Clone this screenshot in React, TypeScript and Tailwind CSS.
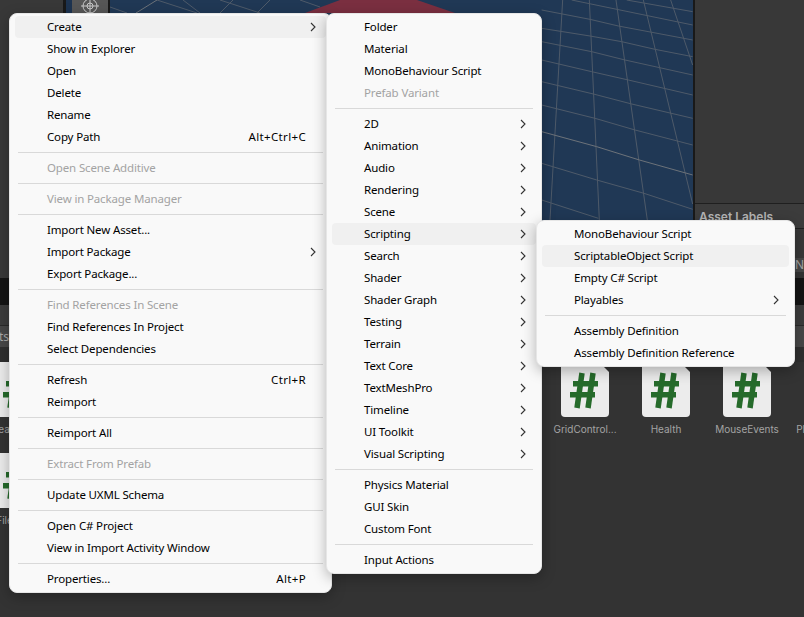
const mainMenu = [
  [
    { label: "Create", arrow: true, active: true },
    { label: "Show in Explorer" },
    { label: "Open" },
    { label: "Delete" },
    { label: "Rename" },
    { label: "Copy Path", shortcut: "Alt+Ctrl+C" },
  ],
  [{ label: "Open Scene Additive", disabled: true }],
  [{ label: "View in Package Manager", disabled: true }],
  [
    { label: "Import New Asset..." },
    { label: "Import Package", arrow: true },
    { label: "Export Package..." },
  ],
  [
    { label: "Find References In Scene", disabled: true },
    { label: "Find References In Project" },
    { label: "Select Dependencies" },
  ],
  [{ label: "Refresh", shortcut: "Ctrl+R" }, { label: "Reimport" }],
  [{ label: "Reimport All" }],
  [{ label: "Extract From Prefab", disabled: true }],
  [{ label: "Update UXML Schema" }],
  [{ label: "Open C# Project" }, { label: "View in Import Activity Window" }],
  [{ label: "Properties...", shortcut: "Alt+P" }],
];

const createMenu = [
  [
    { label: "Folder" },
    { label: "Material" },
    { label: "MonoBehaviour Script" },
    { label: "Prefab Variant", disabled: true },
  ],
  [
    { label: "2D", arrow: true },
    { label: "Animation", arrow: true },
    { label: "Audio", arrow: true },
    { label: "Rendering", arrow: true },
    { label: "Scene", arrow: true },
    { label: "Scripting", arrow: true, active: true },
    { label: "Search", arrow: true },
    { label: "Shader", arrow: true },
    { label: "Shader Graph", arrow: true },
    { label: "Testing", arrow: true },
    { label: "Terrain", arrow: true },
    { label: "Text Core", arrow: true },
    { label: "TextMeshPro", arrow: true },
    { label: "Timeline", arrow: true },
    { label: "UI Toolkit", arrow: true },
    { label: "Visual Scripting", arrow: true },
  ],
  [{ label: "Physics Material" }, { label: "GUI Skin" }, { label: "Custom Font" }],
  [{ label: "Input Actions" }],
];

const scriptingMenu = [
  [
    { label: "MonoBehaviour Script" },
    { label: "ScriptableObject Script", active: true },
    { label: "Empty C# Script" },
    { label: "Playables", arrow: true },
  ],
  [{ label: "Assembly Definition" }, { label: "Assembly Definition Reference" }],
];

type Item = {
  label: string;
  arrow?: boolean;
  active?: boolean;
  disabled?: boolean;
  shortcut?: string;
};

const Menu = ({ groups, className }: { groups: Item[][]; className: string }) => {
  return (
    <div
      className={`absolute rounded-lg border border-[#e6e6e6] bg-[#f9f9f9] px-[5px] py-[2px] shadow-[0_4px_14px_rgba(0,0,0,0.28)] ${className}`}
    >
      {groups.map((group, i) => (
        <div key={i}>
          {i > 0 && <div className="mx-[3px] my-1 h-px bg-[#d9d9d9]" />}
          {group.map((item) => (
            <div
              key={item.label}
              className={`flex h-[22px] items-center rounded pl-8 pr-[10px] text-[11.5px] tracking-[-0.15px] ${
                item.active ? "bg-[#f0f0f0]" : ""
              } ${item.disabled ? "text-[#a3a3a3]" : "text-black"}`}
            >
              <span className="flex-1 whitespace-nowrap">{item.label}</span>
              {item.shortcut && (
                <span className="pr-[10px] tracking-[0.35px]">{item.shortcut}</span>
              )}
              {item.arrow && (
                <svg width="6" height="10" viewBox="0 0 6 10" fill="none">
                  <path d="M1 1l4 4-4 4" stroke="#333" strokeWidth="1.1" />
                </svg>
              )}
            </div>
          ))}
        </div>
      ))}
    </div>
  );
};

const ScriptIcon = () => (
  <svg width="48" height="55" viewBox="0 0 48 55">
    <path
      d="M4 0h34l10 10v41a4 4 0 0 1-4 4H4a4 4 0 0 1-4-4V4a4 4 0 0 1 4-4z"
      fill="#ececec"
    />
    <g stroke="#266b2b" strokeWidth="5.5">
      <path d="M21 11L16 46" />
      <path d="M32 11L27 46" />
    </g>
    <path d="M12 19h25v5.5H12zM9 30h25v5.5H9z" fill="#266b2b" />
  </svg>
);

// cells hidden behind the menus keep their place in the grid
const rows = [
  ["BeatCont...", "", "", "", "", "", "", "GridControl...", "Health", "MouseEvents", "PlayerContr..."],
  ["FileSaver"],
];

const gridLines = [
  "M5 30L150 58L235 78L458 120",
  "M5 85L150 108L245 125L345 148L458 170",
  "M5 125L155 155L255 180L458 225",
  "M5 180L155 215L265 240L458 285",
  "M5 245L160 282L275 312L458 355",
  "M5 315L165 355L285 390L458 435",
  "M5 490L170 540L312 580L458 628",
  "M5 600L175 655",
  "M95 0L458 75",
  "M260 0L458 35",
  "M68 0L30 660",
  "M148 0L178 660",
  "M228 0L322 660",
  "M310 0L458 612",
  "M392 0L458 195",
];

export default function App() {
  return (
    <div
      className="relative flex h-[617px] w-[804px] flex-col overflow-hidden bg-[#333333]"
      style={{ fontFamily: '"Noto Sans", sans-serif' }}
    >
      <div className="flex h-[278px] shrink-0">
        <div className="w-[63px] bg-[#383838]" />
        <div className="w-[3px] bg-[#191919]" />
        <div className="w-[6px] bg-[#1d3350]" />
        <div className="flex w-[36px] justify-center bg-[#565656]">
          <svg width="20" height="20" viewBox="0 0 20 20" fill="none" className="-mt-1" stroke="#c8c8c8">
            <circle cx="10" cy="10" r="7" />
            <path d="M10 1v18M1 10h18" />
            <circle cx="10" cy="10" r="3" />
          </svg>
        </div>
        <div className="w-[2px] bg-[#191919]" />
        <svg className="flex-1" viewBox="110 0 583 278" fill="none">
          <rect x="110" y="0" width="583" height="278" fill="#203855" />
          <path d="M305 13L340 0H417L455 13z" fill="#7a2f40" />
          <g stroke="#4e5a69">
            <path d="M110 7L127 13M157 0L197 13M220 13L233 0M220 0L260 13M200 13L183 0M300 0L320 7M257 13L270 0" />
          </g>
          <path d="M136 13L157 0" stroke="#6c7279" />
          <g transform="translate(540 0) scale(0.3333)" strokeWidth="3">
            <g stroke="#4e5a69">
              {gridLines.map((d) => (
                <path key={d} d={d} />
              ))}
            </g>
            <path d="M5 395L170 440L298 480L458 525" stroke="#6c7279" />
          </g>
        </svg>
        <div className="w-[2px] bg-[#191919]" />
        <div className="flex w-[109px] flex-col bg-[#383838]">
          <div className="h-[203px]" />
          <div
            className="flex h-[26px] items-center border-y border-[#1f1f1f] bg-[#3c3c3c] pl-1 pt-px text-xs font-semibold text-[#b4b4b4]"
            style={{ fontFamily: "Inter, sans-serif" }}
          >
            Asset Labels
          </div>
          <div className="h-[29px]" />
          <div className="flex h-[14px] items-center justify-end bg-[#474747] text-xs text-[#a8a8a8]">
            N
          </div>
          <div className="flex-1 bg-[#333333]" />
        </div>
      </div>
      <div className="h-[27px] shrink-0 bg-[#141414]" />
      <div className="h-[20px] shrink-0 bg-[#3c3c3c]" />
      <div className="flex h-[22px] shrink-0 items-center border-t border-[#2a2a2a] bg-[#474747] text-xs text-[#a8a8a8]">
        <span className="-ml-[27px]">Assets</span>
      </div>
      <div className="h-[15px] shrink-0 bg-[#2f2f2f]" />
      <div className="-ml-[6px] flex flex-col gap-[17px]" style={{ fontFamily: "Inter, sans-serif" }}>
        {rows.map((row, i) => (
          <div key={i} className="flex gap-[33px]">
            {row.map((label, j) => (
              <div key={j} className="flex w-[48px] shrink-0 flex-col items-center">
                <ScriptIcon />
                <span className="mt-[5px] -mx-4 h-[14px] w-[80px] whitespace-nowrap text-center text-[10px] text-[#a3a3a3]">
                  {label}
                </span>
              </div>
            ))}
          </div>
        ))}
      </div>

      <Menu groups={mainMenu} className="left-[9px] top-[13px] w-[323px]" />
      <Menu groups={createMenu} className="left-[326px] top-[13px] w-[216px]" />
      <Menu groups={scriptingMenu} className="left-[536px] top-[220px] w-[259px]" />
    </div>
  );
}
